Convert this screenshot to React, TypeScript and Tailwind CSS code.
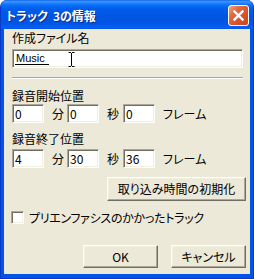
import React from "react";

function Edit({ cls, children }: { cls: string; children?: React.ReactNode }) {
  return (
    <div
      className={
        "relative h-[19px] shrink-0 bg-white border border-t-[#ACA899] border-l-[#ACA899] border-r-white border-b-white shadow-[inset_1px_1px_0_#716F64,inset_-1px_-1px_0_#F1EFE2] pl-[2px] flex items-center text-black " +
        cls
      }
    >
      {children}
    </div>
  );
}

function Btn({ cls, children }: { cls: string; children: React.ReactNode }) {
  return (
    <div
      className={
        "shrink-0 flex items-center justify-center bg-[#ECE9D8] border border-t-white border-l-white border-r-[#716F64] border-b-[#716F64] shadow-[inset_-1px_-1px_0_#ACA899,inset_1px_1px_0_#F1EFE2] text-black " +
        cls
      }
    >
      {children}
    </div>
  );
}

export default function App() {
  return (
    <div className="w-[254px] h-[279px] flex flex-col rounded-t-[7px] overflow-hidden bg-[#0055E5] border-x border-b border-[#0838C8] font-['Noto_Sans_CJK_JP',sans-serif] text-[12px] leading-[14px] [font-feature-settings:'palt']">
      {/* Title bar */}
      <div className="h-[29px] shrink-0 flex items-start justify-between pl-[5px] pr-[4px] bg-[linear-gradient(to_bottom,#0A5BE8_0%,#3D95FF_4%,#2A8BFF_9%,#1378FB_14%,#0567F2_22%,#005DEB_32%,#0057E5_50%,#0054E2_70%,#0057E8_85%,#0561F2_93%,#0055E5_100%)]">
        <div className="mt-[9px] flex text-white font-bold text-[12px] leading-[14px] [text-shadow:1px_1px_0_#0A2A8A]">
          <span>トラック</span>
          <span className="ml-[5px]">3の情報</span>
        </div>
        <div className="mt-[5px] w-[21px] h-[21px] rounded-[3px] border border-white bg-[linear-gradient(135deg,#F2A584_0%,#E46A44_30%,#D9502A_65%,#C8441E_100%)] flex items-center justify-center">
          <svg width="19" height="19" viewBox="0 0 19 19">
            <path d="M5.5 5.5 L13.5 13.5 M13.5 5.5 L5.5 13.5" stroke="white" strokeWidth="2.4" strokeLinecap="square" />
          </svg>
        </div>
      </div>

      {/* Body */}
      <div className="flex-1 mx-[3px] mb-[4px] bg-[#ECE9D8] flex flex-col pl-[8px] pt-[2px] text-black">
        <div className="h-[14px]">作成ファイル名</div>
        <Edit cls="mt-[4px] w-[231px]">
          <span className="inline-block w-[34px] border-b border-black font-['Liberation_Sans',sans-serif] text-[11px] leading-[12px] pl-[1px]">
            Music
          </span>
          <svg className="absolute left-[55px] top-[2px]" width="7" height="15" viewBox="0 0 7 15">
            <path d="M0.5 0.5 H3 M4 0.5 H6.5 M3.5 1 V14 M0.5 14.5 H3 M4 14.5 H6.5" stroke="black" strokeWidth="1" fill="none" />
          </svg>
        </Edit>

        <div className="mt-[9px] w-[231px] h-[2px] border-t border-t-[#ACA899] border-b border-b-white" />

        <div className="mt-[10px] h-[14px]">録音開始位置</div>
        <div className="mt-[1px] h-[19px] flex items-center">
          <Edit cls="w-[32px]">0</Edit>
          <span className="ml-[8px] w-[12px]">分</span>
          <Edit cls="ml-[3px] w-[32px]">0</Edit>
          <span className="ml-[8px] w-[12px]">秒</span>
          <Edit cls="ml-[4px] w-[32px]">0</Edit>
          <span className="ml-[8px]">フレーム</span>
        </div>

        <div className="mt-[9px] h-[14px]">録音終了位置</div>
        <div className="mt-[3px] h-[19px] flex items-center">
          <Edit cls="w-[32px]">4</Edit>
          <span className="ml-[8px] w-[12px]">分</span>
          <Edit cls="ml-[3px] w-[32px]">30</Edit>
          <span className="ml-[8px] w-[12px]">秒</span>
          <Edit cls="ml-[4px] w-[32px]">36</Edit>
          <span className="ml-[8px]">フレーム</span>
        </div>

        <div className="mt-[9px] flex justify-end pr-[4px]">
          <Btn cls="w-[139px] h-[24px]">取り込み時間の初期化</Btn>
        </div>

        <div className="mt-[10px] flex items-center ml-[-1px] h-[13px]">
          <div className="w-[13px] h-[13px] shrink-0 bg-white border border-t-[#ACA899] border-l-[#ACA899] border-r-white border-b-white shadow-[inset_1px_1px_0_#716F64,inset_-1px_-1px_0_#F1EFE2]" />
          <span className="ml-[5px] tracking-[-0.3px]">プリエンファシスのかかったトラック</span>
        </div>

        <div className="mt-[21px] flex justify-end gap-[13px] pr-[4px]">
          <Btn cls="w-[75px] h-[23px]">OK</Btn>
          <Btn cls="w-[75px] h-[23px]">キャンセル</Btn>
        </div>
      </div>
    </div>
  );
}
